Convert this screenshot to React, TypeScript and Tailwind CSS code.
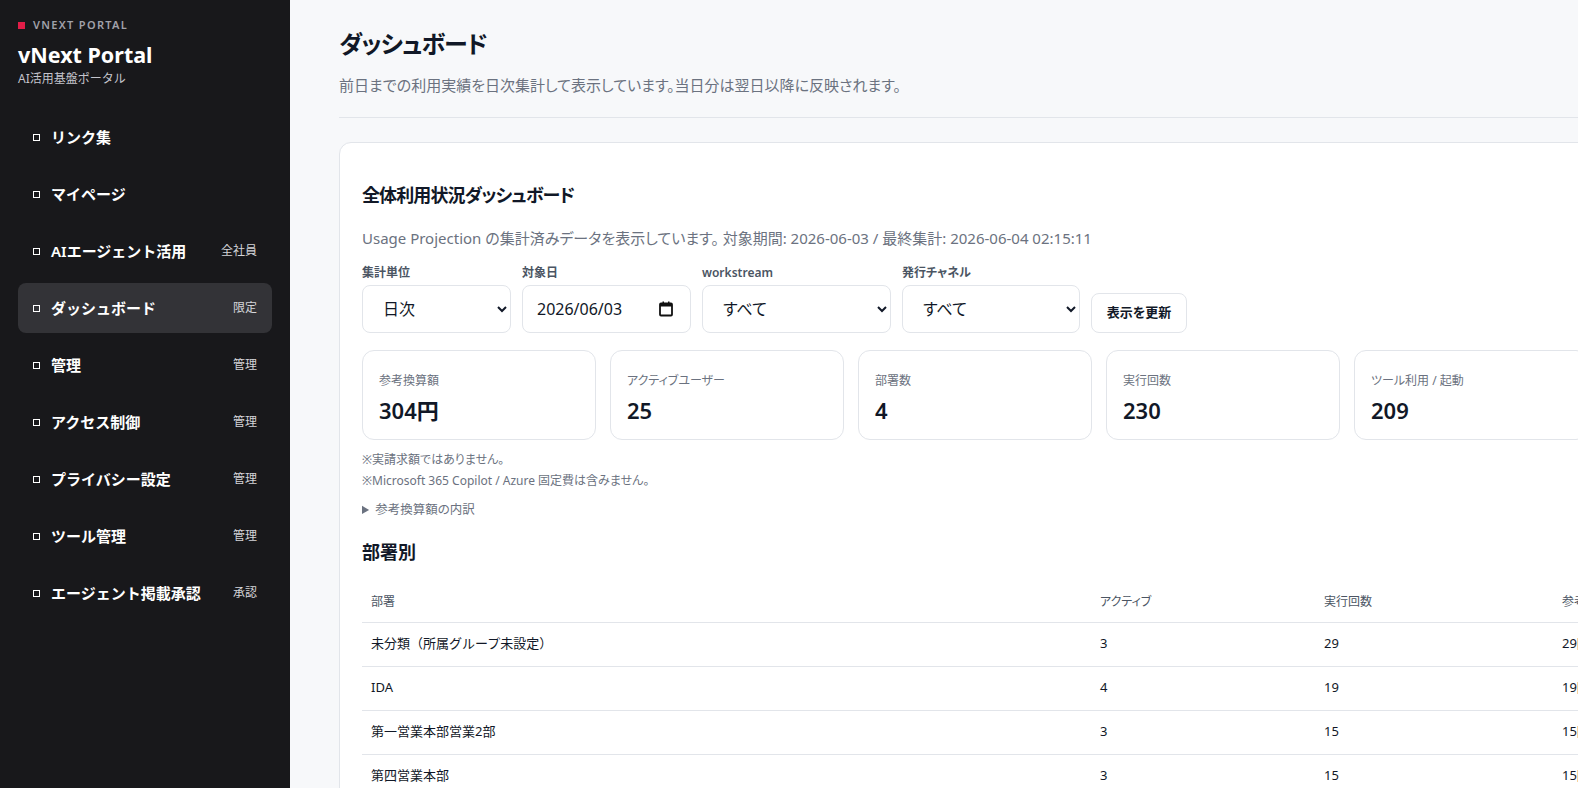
import { useState } from "react";

type NavItem = { label: string; badge?: string; active?: boolean };

const navItems: NavItem[] = [
  { label: "リンク集" },
  { label: "マイページ" },
  { label: "AIエージェント活用", badge: "全社員" },
  { label: "ダッシュボード", badge: "限定", active: true },
  { label: "管理", badge: "管理" },
  { label: "アクセス制御", badge: "管理" },
  { label: "プライバシー設定", badge: "管理" },
  { label: "ツール管理", badge: "管理" },
  { label: "エージェント掲載承認", badge: "承認" },
];

const kpis = [
  { label: "参考換算額", value: "304円" },
  { label: "アクティブユーザー", value: "25" },
  { label: "部署数", value: "4" },
  { label: "実行回数", value: "230" },
  { label: "ツール利用 / 起動", value: "209" },
];

const departments = [
  { name: "未分類（所属グループ未設定）", active: 3, runs: 29, cost: "29円" },
  { name: "IDA", active: 4, runs: 19, cost: "19円" },
  { name: "第一営業本部営業2部", active: 3, runs: 15, cost: "15円" },
  { name: "第四営業本部", active: 3, runs: 15, cost: "15円" },
];

const selectCls =
  "h-12 rounded-lg border border-[#e2e5ea] bg-white pl-4 pr-2 text-[16px] text-[#111827] outline-none";

const Sidebar = () => (
  <aside className="w-[290px] shrink-0 bg-[#18181b] px-[18px] pt-[17px] text-white">
    <div className="flex items-center gap-[8px]">
      <span className="h-[7px] w-[7px] bg-[#e11d48]" />
      <span className="text-[11px] leading-4 font-semibold tracking-[0.12em] text-[#a1a1aa]">
        VNEXT PORTAL
      </span>
    </div>
    <div className="mt-2 text-[21.5px] leading-7 font-bold">vNext Portal</div>
    <div className="mt-[2px] text-[12px] leading-4 text-[#c4c4cc]">AI活用基盤ポータル</div>

    <nav className="mt-[25px] flex flex-col gap-[7px]">
      {navItems.map((item) => (
        <div
          key={item.label}
          className={
            "flex h-[50px] items-center rounded-lg pl-[15px] pr-[15px] " +
            (item.active ? "bg-[#333337]" : "")
          }
        >
          <span className="h-[7px] w-[7px] border-[1.5px] border-white" />
          <span className="ml-[11px] flex-1 text-[15px] font-semibold">{item.label}</span>
          {item.badge && <span className="text-[12px] text-[#d4d4d8]">{item.badge}</span>}
        </div>
      ))}
    </nav>
  </aside>
);

const CalendarIcon = () => (
  <svg width="14" height="16" viewBox="0 0 14 16" className="text-[#111]">
    <rect x="1" y="2.5" width="12" height="12" rx="1" fill="none" stroke="currentColor" strokeWidth="1.8" />
    <rect x="1" y="2.5" width="12" height="3" fill="currentColor" />
    <rect x="3.5" y="0.5" width="1.5" height="3" fill="currentColor" />
    <rect x="9" y="0.5" width="1.5" height="3" fill="currentColor" />
  </svg>
);

const App = () => {
  const [unit, setUnit] = useState("daily");
  const [workstream, setWorkstream] = useState("all");
  const [channel, setChannel] = useState("all");

  return (
    <div
      className="flex h-screen overflow-hidden bg-[#f7f8fa] text-[#111827]"
      style={{ fontFamily: '"Noto Sans", "Noto Sans CJK JP", sans-serif' }}
    >
      <Sidebar />

      <main className="min-w-0 flex-1 overflow-hidden pt-[26px] pl-[49px] [font-feature-settings:'palt']">
        <div className="w-[1400px]">
          <header className="border-b border-[#e2e5ea] pb-[20px]">
            <h1 className="text-[24px] leading-9 font-bold tracking-[-0.04em]">ダッシュボード</h1>
            <p className="mt-[11px] text-[15px] leading-6 text-[#6b7280]">
              前日までの利用実績を日次集計して表示しています。当日分は翌日以降に反映されます。
            </p>
          </header>

          <section className="mt-[24px] rounded-xl border border-[#e2e5ea] bg-white px-[22px] pt-[38px] pb-10">
            <h2 className="text-[18px] leading-7 font-bold tracking-[-0.05em]">全体利用状況ダッシュボード</h2>
            <p className="mt-[17px] text-[15px] leading-6 text-[#6b7280]">
              Usage Projection の集計済みデータを表示しています。 対象期間: 2026-06-03 / 最終集計: 2026-06-04 02:15:11
            </p>

            <div className="mt-[15px] flex items-end gap-[11px]">
              <label className="flex flex-col gap-1">
                <span className="text-[12px] leading-4 font-semibold text-[#4b5563]">集計単位</span>
                <select className={selectCls + " w-[149px]"} value={unit} onChange={(e) => setUnit(e.target.value)}>
                  <option value="daily">日次</option>
                  <option value="weekly">週次</option>
                  <option value="monthly">月次</option>
                </select>
              </label>
              <label className="flex flex-col gap-1">
                <span className="text-[12px] leading-4 font-semibold text-[#4b5563]">対象日</span>
                <div className="flex h-12 w-[169px] items-center justify-between rounded-lg border border-[#e2e5ea] bg-white pr-[17px] pl-[14px] text-[16px]">
                  <span>2026/06/03</span>
                  <CalendarIcon />
                </div>
              </label>
              <label className="flex flex-col gap-1">
                <span className="text-[12px] leading-4 font-semibold text-[#4b5563]">workstream</span>
                <select
                  className={selectCls + " w-[189px]"}
                  value={workstream}
                  onChange={(e) => setWorkstream(e.target.value)}
                >
                  <option value="all">すべて</option>
                </select>
              </label>
              <label className="flex flex-col gap-1">
                <span className="text-[12px] leading-4 font-semibold text-[#4b5563]">発行チャネル</span>
                <select className={selectCls + " w-[178px]"} value={channel} onChange={(e) => setChannel(e.target.value)}>
                  <option value="all">すべて</option>
                </select>
              </label>
              <button className="h-10 w-[96px] rounded-lg border border-[#e2e5ea] bg-white text-[13px] font-bold">
                表示を更新
              </button>
            </div>

            <div className="mt-[17px] grid grid-cols-[repeat(5,234px)] gap-[14px]">
              {kpis.map((k) => (
                <div key={k.label} className="h-[90px] rounded-xl border border-[#e2e5ea] px-[16px] pt-[22px]">
                  <div className="text-[12px] leading-4 text-[#6b7280]">{k.label}</div>
                  <div className="mt-[7px] text-[22px] leading-7 font-semibold">{k.value}</div>
                </div>
              ))}
            </div>

            <div className="mt-[9px] text-[12px] leading-[21px] text-[#6b7280]">
              <p>※実請求額ではありません。</p>
              <p>※Microsoft 365 Copilot / Azure 固定費は含みません。</p>
            </div>

            <details className="mt-[10px] text-[12.5px] leading-[18px] text-[#6b7280]">
              <summary className="cursor-pointer">参考換算額の内訳</summary>
            </details>

            <h2 className="mt-[19px] text-[18px] leading-7 font-bold">部署別</h2>

            <table className="mt-[16px] w-full border-collapse text-left">
              <thead>
                <tr className="h-[40px] border-b border-[#e2e5ea] text-[12px] text-[#4b5563]">
                  <th className="w-[738px] pl-[9px] font-normal">部署</th>
                  <th className="w-[224px] font-normal">アクティブ</th>
                  <th className="w-[238px] font-normal">実行回数</th>
                  <th className="font-normal">参考換算額</th>
                </tr>
              </thead>
              <tbody className="text-[13px] [font-feature-settings:normal]">
                {departments.map((d) => (
                  <tr key={d.name} className="h-[44px] border-b border-[#e2e5ea]">
                    <td className="pl-[9px]">{d.name}</td>
                    <td>{d.active}</td>
                    <td>{d.runs}</td>
                    <td>{d.cost}</td>
                  </tr>
                ))}
              </tbody>
            </table>
          </section>
        </div>
      </main>
    </div>
  );
};

export default App;
